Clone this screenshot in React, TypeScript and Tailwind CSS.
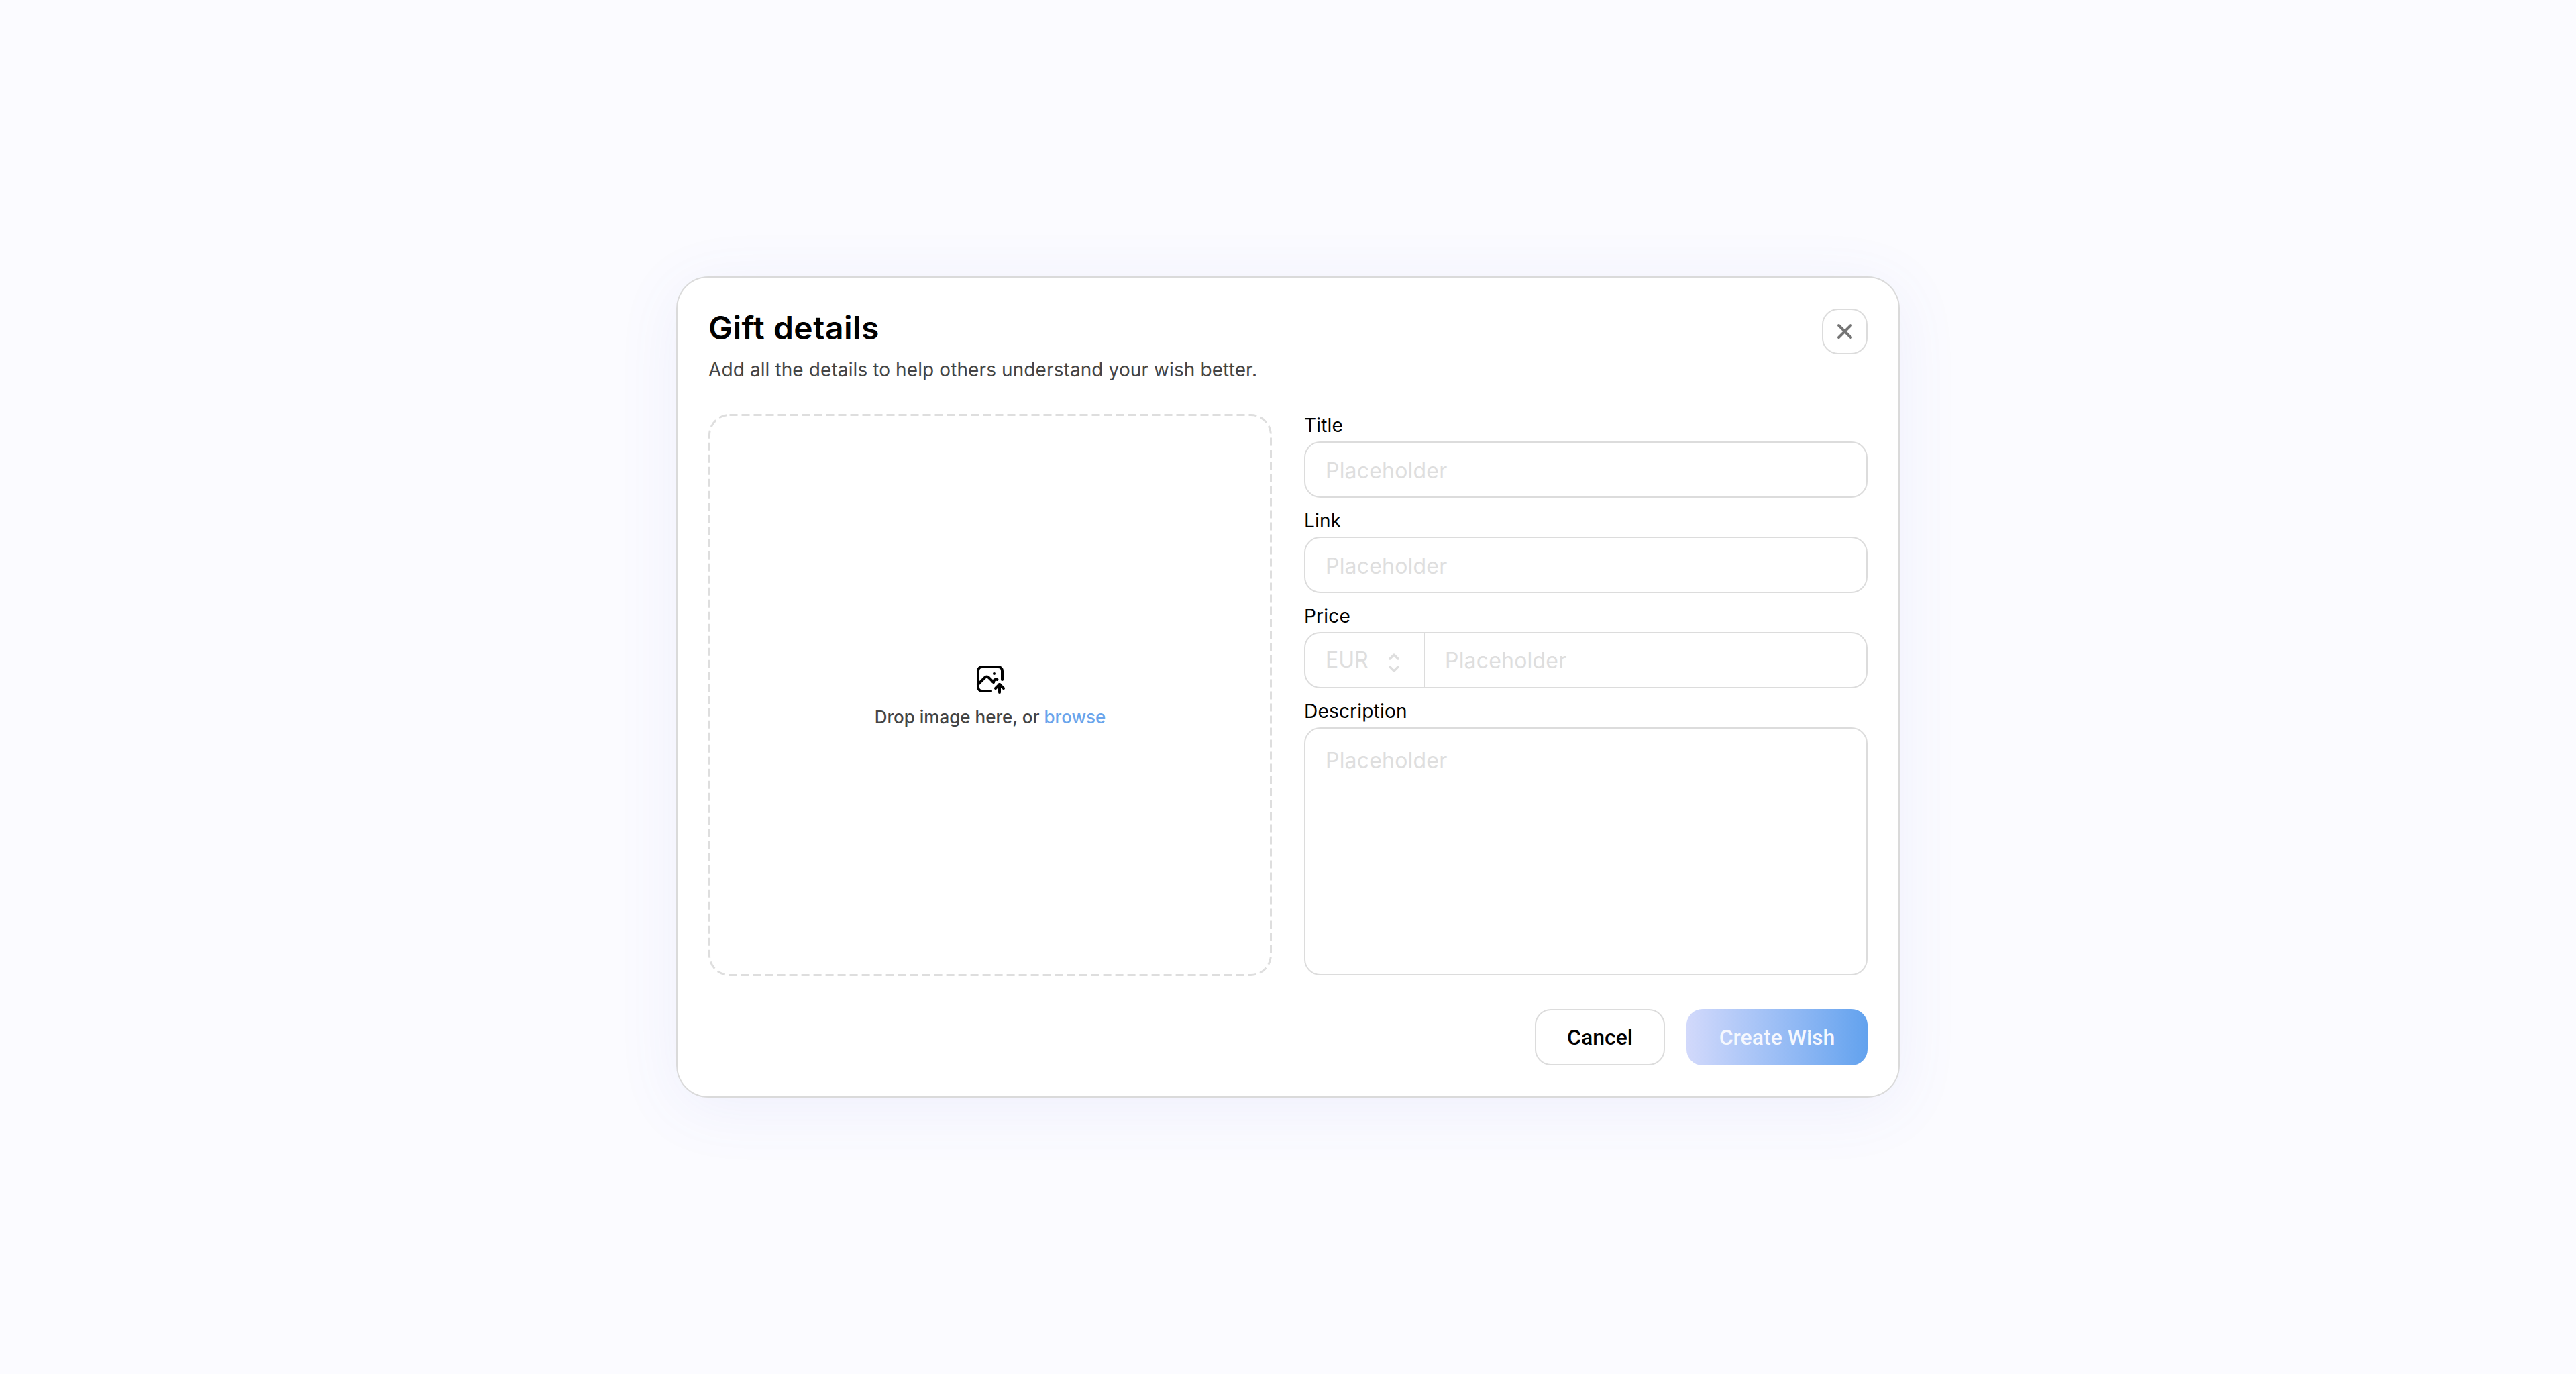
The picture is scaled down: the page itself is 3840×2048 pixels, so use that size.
import { TbPhotoUp } from "react-icons/tb";

const inputClass =
  "w-full h-[84px] rounded-[24px] border-2 border-[#dcdcdc] bg-white px-[30px] pt-[3px] text-[32px] tracking-[0.2px] text-black outline-none placeholder:text-[#dedede]";

function Label({ children }: { children: string }) {
  return <label className="block h-[33px] mb-2 text-[28px] leading-[34px] font-normal tracking-[0.2px] text-black">{children}</label>;
}

export default function App() {
  return (
    <div className="min-h-screen flex items-center justify-center bg-[#fbfbff] font-['Inter',sans-serif]">
      <div className="w-[1824px] h-[1224px] flex flex-col rounded-[48px] border-2 border-[#dadada] bg-white p-[46px] shadow-[0_16px_96px_rgba(90,100,220,0.08)]">
        <div className="flex justify-between h-[157px]">
          <div>
            <h1 className="text-[48px] leading-[58px] font-semibold tracking-[0.5px] text-black">Gift details</h1>
            <p className="mt-[16px] text-[28px] leading-[34px] tracking-[0.1px] text-[#444444]">
              Add all the details to help others understand your wish better.
            </p>
          </div>
          <button className="w-[68px] h-[68px] flex items-center justify-center rounded-[24px] border-2 border-[#dcdcdc] bg-white">
            <svg width="24" height="24" viewBox="0 0 24 24" fill="none" stroke="#757575" strokeWidth="4" strokeLinecap="round">
              <path d="M3 3l18 18M21 3L3 21" />
            </svg>
          </button>
        </div>

        <div className="flex gap-[48px] h-[838px]">
          <div className="relative w-[840px] flex flex-col items-center justify-center pt-[5px] rounded-[32px]">
            <svg className="absolute inset-0" width="840" height="838" fill="none">
              <rect x="1.5" y="1.5" width="837" height="835" rx="30" stroke="#dedede" strokeWidth="3" strokeDasharray="12 6" />
            </svg>
            <TbPhotoUp size={48} className="text-black" />
            <p className="mt-[15px] text-[26px] leading-[36px] font-medium text-[#444444]">
              Drop image here, or <span className="text-[#6aa5ec]">browse</span>
            </p>
          </div>

          <div className="w-[840px] flex flex-col gap-[17px]">
            <div>
              <Label>Title</Label>
              <input className={inputClass} placeholder="Placeholder" />
            </div>
            <div>
              <Label>Link</Label>
              <input className={inputClass} placeholder="Placeholder" />
            </div>
            <div>
              <Label>Price</Label>
              <div className="flex h-[84px] rounded-[24px] border-2 border-[#dcdcdc]">
                <div className="w-[178px] shrink-0 flex items-center justify-between pl-[30px] pr-[36px] border-r-2 border-[#dcdcdc] text-[32px] text-[#dedede]">
                  <span>EUR</span>
                  <svg className="mt-[8px]" width="16" height="28" viewBox="0 0 16 28" fill="none" stroke="#dedede" strokeWidth="3.5" strokeLinecap="round" strokeLinejoin="round">
                    <path d="M2 8l6-6 6 6M2 20l6 6 6-6" />
                  </svg>
                </div>
                <input className="flex-1 min-w-0 rounded-r-[24px] px-[30px] pt-[3px] text-[32px] tracking-[0.2px] outline-none placeholder:text-[#dedede]" placeholder="Placeholder" />
              </div>
            </div>
            <div className="flex-1 flex flex-col">
              <Label>Description</Label>
              <textarea className="flex-1 w-full resize-none rounded-[24px] border-2 border-[#dcdcdc] px-[30px] pt-[28px] pb-[26px] text-[32px] leading-[40px] tracking-[0.2px] outline-none placeholder:text-[#dedede]" placeholder="Placeholder" />
            </div>
          </div>
        </div>

        <div className="mt-[50px] flex justify-end gap-[32px]">
          <button className="w-[194px] h-[84px] rounded-[24px] border-2 border-[#dcdcdc] bg-white font-['Roboto',sans-serif] text-[32px] font-medium text-black">
            Cancel
          </button>
          <button className="w-[270px] h-[84px] rounded-[24px] bg-gradient-to-r from-[#d2d9fb] to-[#62a2ee] font-['Roboto',sans-serif] text-[32px] font-medium text-[#f6f8fe]">
            Create Wish
          </button>
        </div>
      </div>
    </div>
  );
}
